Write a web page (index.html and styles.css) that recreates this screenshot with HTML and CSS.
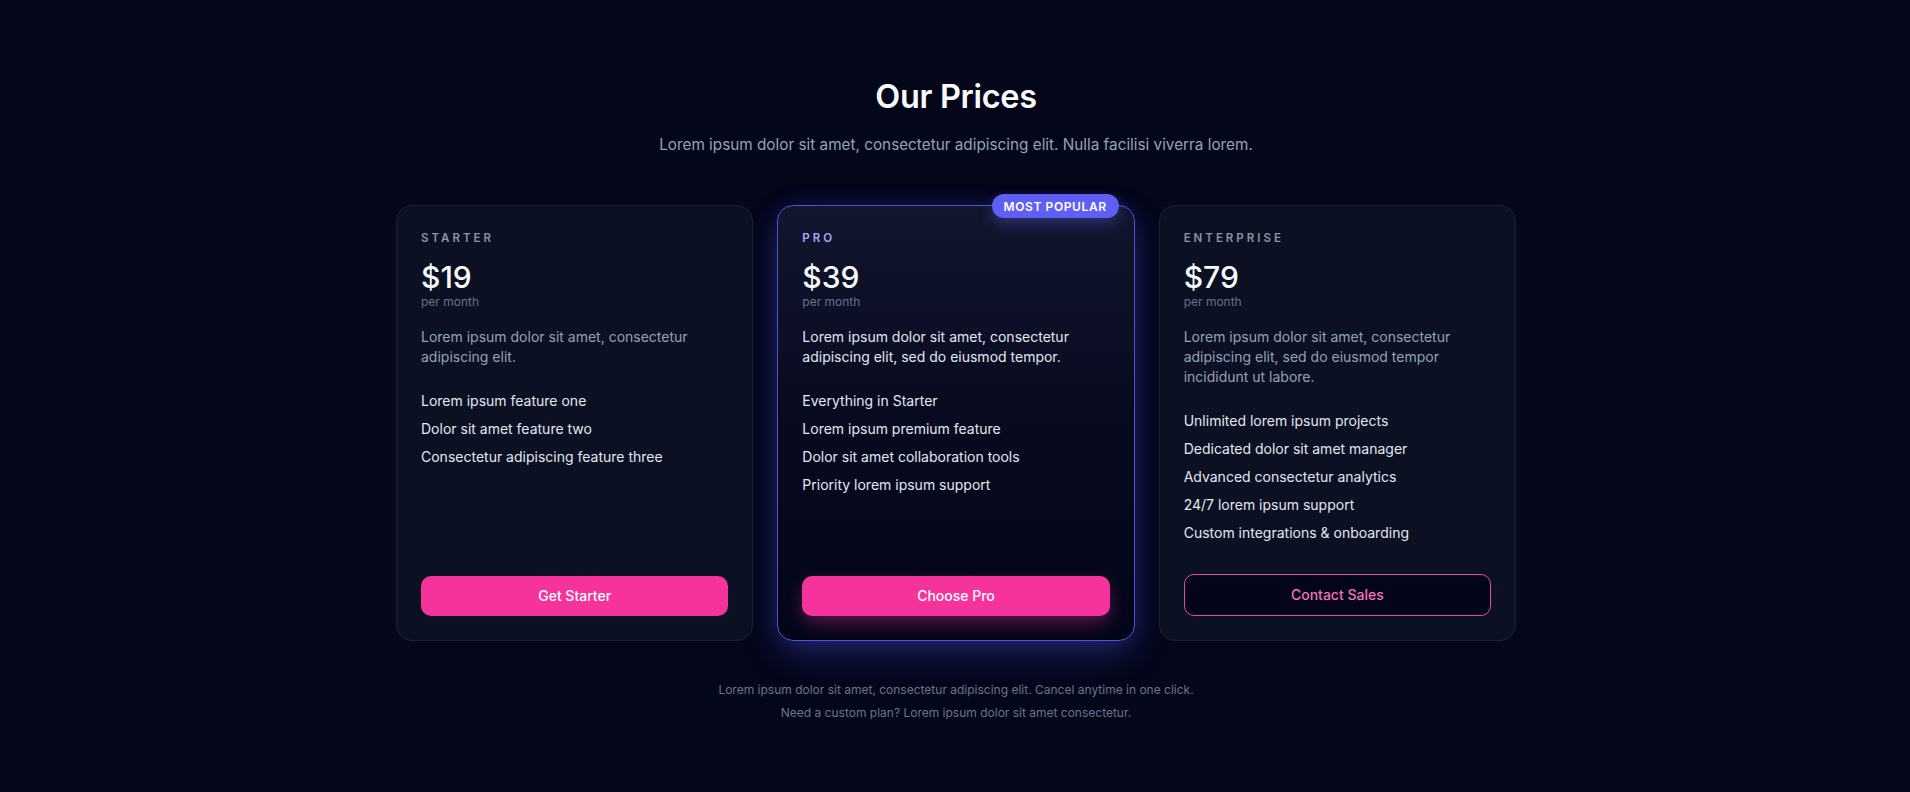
FILE: index.html
```html
<!DOCTYPE html>
<html lang="en">
<head>
<meta charset="utf-8">
<title>Our Prices</title>
<link rel="stylesheet" href="styles.css">
</head>
<body>
<main class="pricing">
  <header class="pricing-header">
    <h1 class="title">Our Prices</h1>
    <p class="subtitle">Lorem ipsum dolor sit amet, consectetur adipiscing elit. Nulla facilisi viverra lorem.</p>
  </header>

  <section class="plans">
    <article class="card">
      <div class="plan-name">STARTER</div>
      <div class="price">$19</div>
      <div class="period">per month</div>
      <p class="desc">Lorem ipsum dolor sit amet, consectetur adipiscing elit.</p>
      <ul class="features">
        <li>Lorem ipsum feature one</li>
        <li>Dolor sit amet feature two</li>
        <li>Consectetur adipiscing feature three</li>
      </ul>
      <button class="btn btn-primary">Get Starter</button>
    </article>

    <article class="card card-featured">
      <span class="badge">MOST POPULAR</span>
      <div class="plan-name">PRO</div>
      <div class="price">$39</div>
      <div class="period">per month</div>
      <p class="desc">Lorem ipsum dolor sit amet, consectetur adipiscing elit, sed do eiusmod tempor.</p>
      <ul class="features">
        <li>Everything in Starter</li>
        <li>Lorem ipsum premium feature</li>
        <li>Dolor sit amet collaboration tools</li>
        <li>Priority lorem ipsum support</li>
      </ul>
      <button class="btn btn-primary btn-glow">Choose Pro</button>
    </article>

    <article class="card">
      <div class="plan-name">ENTERPRISE</div>
      <div class="price">$79</div>
      <div class="period">per month</div>
      <p class="desc">Lorem ipsum dolor sit amet, consectetur adipiscing elit, sed do eiusmod tempor incididunt ut labore.</p>
      <ul class="features">
        <li>Unlimited lorem ipsum projects</li>
        <li>Dedicated dolor sit amet manager</li>
        <li>Advanced consectetur analytics</li>
        <li>24/7 lorem ipsum support</li>
        <li>Custom integrations &amp; onboarding</li>
      </ul>
      <button class="btn btn-outline">Contact Sales</button>
    </article>
  </section>

  <footer class="pricing-footer">
    <p>Lorem ipsum dolor sit amet, consectetur adipiscing elit. Cancel anytime in one click.</p>
    <p>Need a custom plan? Lorem ipsum dolor sit amet consectetur.</p>
  </footer>
</main>
</body>
</html>
```

FILE: styles.css
```css
* { box-sizing: border-box; }

html, body {
  margin: 0;
  background: #04071a;
}

body {
  font-family: Inter, "Noto Sans", "Liberation Sans", sans-serif;
  color: #f8fafc;
  min-height: 792px;
  padding-left: 2px;
}

.pricing {
  max-width: 1120px;
  margin: 0 auto;
  padding-top: 77px;
}

.pricing-header {
  text-align: center;
}

.title {
  margin: 0;
  font-size: 32.5px;
  line-height: 40px;
  font-weight: 600;
  letter-spacing: -0.01em;
  color: #f8fafc;
}

.subtitle {
  margin: 16px 0 0;
  font-size: 15.3px;
  line-height: 24px;
  color: #94a3b8;
}

.plans {
  margin-top: 48px;
  display: grid;
  grid-template-columns: repeat(3, 1fr);
  gap: 24px;
  align-items: stretch;
}

.card {
  position: relative;
  display: flex;
  flex-direction: column;
  padding: 25px 24px 24px;
  border: 1px solid #1b2234;
  border-radius: 16px;
  background: #0b1022;
}

.card-featured {
  border-color: #5052d6;
  background: linear-gradient(180deg, #12162e 0%, #080b20 45%, #03061a 100%);
  box-shadow: 0 14px 36px -6px rgba(79, 82, 230, 0.42), 0 0 22px rgba(79, 82, 230, 0.15);
}

.badge {
  position: absolute;
  top: -12px;
  right: 15px;
  height: 24px;
  padding: 0 12px;
  display: flex;
  align-items: center;
  border-radius: 999px;
  background: #5f5ff5;
  color: #ffffff;
  font-size: 12px;
  font-weight: 600;
  letter-spacing: 0.05em;
  box-shadow: 0 6px 14px rgba(99, 102, 241, 0.35);
}

.plan-name {
  font-size: 11.5px;
  line-height: 14px;
  font-weight: 600;
  letter-spacing: 0.26em;
  color: #8a94a8;
}

.card-featured .plan-name {
  color: #a5abf5;
}

.price {
  margin-top: 16px;
  font-size: 30px;
  line-height: 32px;
  font-weight: 500;
  color: #f8fafc;
}

.period {
  margin-top: 1px;
  font-size: 12px;
  line-height: 16px;
  color: #64748b;
}

.desc {
  margin: 17px 0 0;
  font-size: 14px;
  line-height: 20px;
  color: #94a3b8;
}

.card-featured .desc {
  color: #e2e8f0;
}

.features {
  margin: 24px 0 31px;
  padding: 0;
  list-style: none;
  display: flex;
  flex-direction: column;
  gap: 8px;
  font-size: 14px;
  line-height: 20px;
  color: #e2e8f0;
}

.btn {
  margin-top: auto;
  width: 100%;
  border-radius: 10px;
  font-family: inherit;
  font-size: 14px;
  line-height: 20px;
  font-weight: 500;
  cursor: pointer;
}

.btn-primary {
  padding: 10px 16px;
  border: 0;
  background: #f5339b;
  color: #ffffff;
}

.btn-glow {
  box-shadow: 0 8px 18px -2px rgba(245, 51, 155, 0.38);
}

.btn-outline {
  padding: 10px 16px;
  border: 1px solid #ec4899;
  background: #03061a;
  color: #f472b6;
}

.pricing-footer {
  margin-top: 37px;
  text-align: center;
  font-size: 12px;
  line-height: 23px;
  color: #6b7589;
}

.pricing-footer p {
  margin: 0;
}
```
